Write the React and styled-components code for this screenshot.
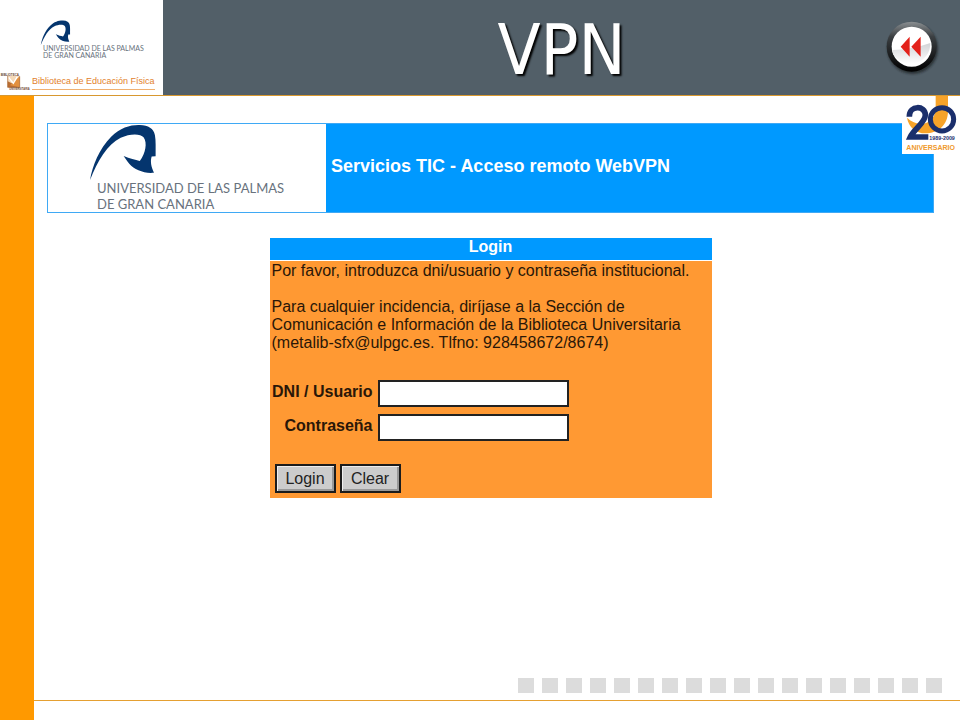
import React from "react";
import styled, { createGlobalStyle } from "styled-components";

const GlobalStyle = createGlobalStyle`
  *, *::before, *::after { box-sizing: border-box; }
  body {
    margin: 0;
    background: #fff;
    color: #2a1708;
    font-family: "Liberation Sans", Arial, sans-serif;
  }
`;

const Page = styled.div`
  display: flex;
  flex-direction: column;
  min-height: 100vh;
`;

const Header = styled.header`
  display: grid;
  grid-template-columns: 163px 1fr;
  min-height: 96px;
  border-bottom: 1px solid #d8982f;
`;

const Brand = styled.div`
  display: flex;
  flex-direction: column;
  justify-content: space-between;
  padding: 20px 10px 4px 0;
  background: #fff;
`;

const TitleBar = styled.div`
  display: grid;
  grid-template-columns: 96px 1fr 96px;
  align-items: center;
  justify-items: center;
  background: #525f68;
`;

const Title = styled.h1`
  grid-column: 2;
  margin: 0;
  padding-top: 4px;
  color: #fff;
  font: 400 70px/80px "DejaVu Sans Condensed", "Arial Narrow", sans-serif;
  text-shadow: 2px 2px 2px #000;
`;

const BackButton = styled.button`
  padding: 0;
  border: 0;
  background: none;
  cursor: pointer;
`;

const Drawing = styled.svg`
  display: block;
  flex: none;
`;

const UniversityLogo = styled.div`
  padding-left: ${(p) => (p.$small ? 39 : 41)}px;
`;

const UniversityName = styled.div`
  padding-left: ${(p) => (p.$small ? 4 : 8)}px;
  color: #68727d;
  font-family: Lato, "Open Sans", sans-serif;
  font-size: ${(p) => (p.$small ? 7 : 13)}px;
  line-height: ${(p) => (p.$small ? 7 : 16)}px;
  white-space: nowrap;
`;

const Library = styled.div`
  display: flex;
  align-items: flex-end;
`;

const LibraryName = styled.div`
  margin-bottom: 1px;
  border-bottom: 1px solid #f0b070;
  color: #e2812c;
  font-size: 9px;
  line-height: 15px;
  white-space: nowrap;
`;

const Body = styled.div`
  display: flex;
  flex: 1;
`;

const Rail = styled.div`
  flex: none;
  width: 34px;
  background: #f90;
`;

const Content = styled.div`
  position: relative;
  display: flex;
  flex: 1;
  flex-direction: column;
`;

const Main = styled.main`
  flex: 1;
  padding: 27px 26px 0 13px;
`;

const Anniversary = styled.div`
  position: absolute;
  top: 0;
  right: 0;
  background: #fff;
`;

const Banner = styled.div`
  display: grid;
  grid-template-columns: 278px 1fr;
  min-height: 90px;
  border: 1px solid #3fa9f5;
  background: #09f;
`;

const BannerLogo = styled.div`
  background: #fff;
`;

const BannerTitle = styled.h2`
  align-self: center;
  margin: 0;
  padding: 0 5px 4px;
  color: #fff;
  font-size: 18px;
  line-height: 20px;
`;

const LoginCard = styled.form`
  width: 442px;
  max-width: 100%;
  margin: 25px auto 0;
  background: #f93;
`;

const CardTitle = styled.h3`
  margin: 0;
  padding-bottom: 4px;
  border-bottom: 1px solid #fff;
  background: #09f;
  color: #fff;
  font-size: 16px;
  line-height: 18px;
  text-align: center;
`;

const Message = styled.p`
  margin: 0 0 17px;
  padding: 1px 0 0 2px;
  font-size: 16px;
  line-height: 18px;
`;

const Fields = styled.div`
  display: grid;
  grid-template-columns: 108px 191px;
  row-gap: 7px;
  padding-top: 11px;
`;

const Label = styled.label`
  padding: 3px 5px 0 0;
  font-size: 16px;
  font-weight: 700;
  line-height: 18px;
  text-align: right;
  white-space: nowrap;
`;

const Field = styled.input`
  width: 100%;
  height: 27px;
  padding: 2px 4px;
  border: 2px solid #222;
  border-radius: 0;
  background: #fff;
  font: 16px "Liberation Sans", Arial, sans-serif;
`;

const Actions = styled.div`
  display: flex;
  gap: 4px;
  padding: 23px 5px 5px;
`;

const ActionButton = styled.button`
  min-width: 61px;
  height: 29px;
  padding: 0;
  border: 2px solid #1c1c1c;
  border-radius: 0;
  background: #ccc;
  box-shadow: inset 1px 1px #eee, inset -2px -2px #999;
  color: #222;
  font: 16px "Liberation Sans", Arial, sans-serif;
`;

const Footer = styled.footer`
  padding-bottom: 19px;
`;

const Squares = styled.div`
  display: flex;
  justify-content: flex-end;
  gap: 8px;
  padding: 0 18px 7px 0;
  border-bottom: 1px solid #e5a032;
`;

const Square = styled.span`
  width: 16px;
  height: 15px;
  background: #dcdcdc;
`;

function Emblem({ width, height }) {
  return (
    <Drawing width={width} height={height} viewBox="0 0 204 170" aria-hidden="true">
      <path
        fill="#04356e"
        d="M2 170C9 128 30 75 66 39C94 10 126 2 153 3C179 4 195 13 199 34C202 51 201 72 201 98L189 99C184 116 188 130 196 148C165 151 137 139 121 121C113 111 109 104 104 97C123 105 139 109 153 112C171 90 176 56 165 41C155 28 122 29 95 42C54 62 25 112 2 170Z"
      />
    </Drawing>
  );
}

function University({ small }) {
  return (
    <UniversityLogo $small={small}>
      <Emblem width={small ? 33 : 68} height={small ? 25 : 56} />
      <UniversityName $small={small}>
        UNIVERSIDAD DE LAS PALMAS
        <br />
        DE GRAN CANARIA
      </UniversityName>
    </UniversityLogo>
  );
}

function LibraryMark() {
  return (
    <Drawing width="32" height="19" viewBox="0 0 96 57" role="img" aria-label="Biblioteca Universitaria">
      <path d="M23 11H59V46H23Z" fill="#f5d9b8" />
      <path d="M23 46V28L59 46Z" fill="#b96d32" />
      <path d="M30 40L59 13V46Z" fill="#e2903f" />
      <path d="M26 16L40 34L52 14" stroke="#fff" strokeWidth="4" fill="none" />
      <path d="M23 11V46H59V13" stroke="#a8642f" strokeWidth="2" fill="none" />
      <text x="2" y="12" fontSize="9" fontWeight="700" fill="#704b35">BIBLIOTECA</text>
      <text x="28" y="54" fontSize="8" fontWeight="700" fill="#704b35">UNIVERSITARIA</text>
    </Drawing>
  );
}

function RewindIcon() {
  return (
    <Drawing width="56" height="56" viewBox="0 0 168 168" aria-hidden="true">
      <defs>
        <linearGradient id="ring" x1="0" y1="0" x2="0" y2="1">
          <stop offset="0" stopColor="#8a8f92" />
          <stop offset=".3" stopColor="#3b3f42" />
          <stop offset="1" stopColor="#000" />
        </linearGradient>
        <linearGradient id="face" x1="0" y1="0" x2="0" y2="1">
          <stop offset="0" stopColor="#d2d4d7" />
          <stop offset="1" stopColor="#fff" />
        </linearGradient>
        <filter id="soft"><feGaussianBlur stdDeviation="3" /></filter>
      </defs>
      <circle cx="86" cy="86" r="76" fill="#1b2023" opacity=".7" filter="url(#soft)" />
      <circle cx="83" cy="80" r="75" fill="url(#ring)" />
      <circle cx="83" cy="80" r="60" fill="#fff" />
      <path d="M25 90Q80 90 139 69A60 60 0 0 1 27 101Z" fill="url(#face)" />
      <path d="M77 50V110L50 80ZM110 50V110L82 80Z" fill="#e3221b" />
    </Drawing>
  );
}

function AnniversaryMark() {
  return (
    <Drawing width="58" height="58" viewBox="0 0 174 174" role="img" aria-label="20 aniversario 1989-2009">
      <path d="M101 0H138V45C138 88 108 112 70 112C42 112 20 94 15 65C34 82 55 88 74 80C94 72 101 55 101 30Z" fill="#f7a329" />
      <path d="M22 62C22 26 70 28 70 57C70 80 36 99 25 123H79" fill="none" stroke="#1b2f6c" strokeWidth="17" />
      <ellipse cx="120" cy="70" rx="35" ry="35" fill="none" stroke="#1b2f6c" strokeWidth="15" />
      <text x="82" y="132" fontSize="16" fontWeight="700" fill="#1b2f6c">1989-2009</text>
      <text x="13" y="161" fontSize="21" fontWeight="700" fill="#f09a2c">ANIVERSARIO</text>
    </Drawing>
  );
}

export default function App() {
  return (
    <Page>
      <GlobalStyle />
      <Header>
        <Brand>
          <University small />
          <Library>
            <LibraryMark />
            <LibraryName>Biblioteca de Educación Física</LibraryName>
          </Library>
        </Brand>
        <TitleBar>
          <Title>VPN</Title>
          <BackButton type="button" aria-label="Volver">
            <RewindIcon />
          </BackButton>
        </TitleBar>
      </Header>
      <Body>
        <Rail />
        <Content>
          <Main>
            <Banner>
              <BannerLogo>
                <University />
              </BannerLogo>
              <BannerTitle>Servicios TIC - Acceso remoto WebVPN</BannerTitle>
            </Banner>
            <LoginCard onSubmit={(e) => e.preventDefault()}>
              <CardTitle>Login</CardTitle>
              <Message>
                Por favor, introduzca dni/usuario y contraseña institucional.
                <br />
                <br />
                Para cualquier incidencia, diríjase a la Sección de
                <br />
                Comunicación e Información de la Biblioteca Universitaria
                <br />
                (metalib-sfx@ulpgc.es. Tlfno: 928458672/8674)
              </Message>
              <Fields>
                <Label htmlFor="user">DNI / Usuario</Label>
                <Field id="user" type="text" />
                <Label htmlFor="password">Contraseña</Label>
                <Field id="password" type="password" />
              </Fields>
              <Actions>
                <ActionButton type="submit">Login</ActionButton>
                <ActionButton type="reset">Clear</ActionButton>
              </Actions>
            </LoginCard>
          </Main>
          <Footer>
            <Squares>
              {Array.from({ length: 18 }, (_, i) => (
                <Square key={i} />
              ))}
            </Squares>
          </Footer>
          <Anniversary>
            <AnniversaryMark />
          </Anniversary>
        </Content>
      </Body>
    </Page>
  );
}
